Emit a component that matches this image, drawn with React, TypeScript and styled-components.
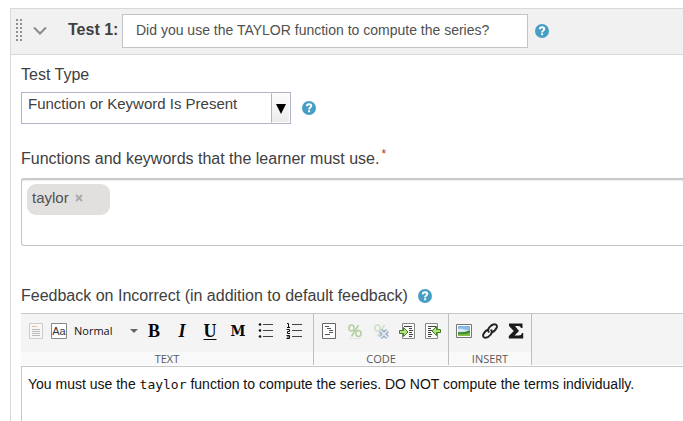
import React, { useState } from 'react';
import styled, { createGlobalStyle } from 'styled-components';

const GlobalStyle = createGlobalStyle`
  * { box-sizing: border-box; }
  body {
    margin: 0;
    background: #fff;
    color: #404040;
    font: 16px/20px "Liberation Sans", Arial, sans-serif;
    overflow-x: hidden;
  }
  button, input, select, textarea { font: inherit; color: inherit; }
`;

const Card = styled.section`
  margin: 8px 0 0 10px;
  border: 1px solid #d9d9d9;
  border-width: 1px 0 0 1px;
  min-height: calc(100vh - 8px);
`;

const Header = styled.header`
  display: flex;
  align-items: center;
  height: 46px;
  padding: 0 5px 2px;
  background: #f1f1f1;
  border-bottom: 1px solid #d9d9d9;
`;

const PlainButton = styled.button`
  display: flex;
  flex: none;
  align-items: center;
  justify-content: center;
  padding: 0;
  border: 0;
  background: none;
  cursor: pointer;
`;

const Toggle = styled(PlainButton)`
  margin: 0 21px 0 10px;
`;

const TitleLabel = styled.label`
  flex: none;
  width: 54px;
  padding-bottom: 2px;
  font-weight: bold;
`;

const TitleInput = styled.input`
  flex: 0 1 406px;
  min-width: 0;
  height: 34px;
  padding: 0 13px 2px;
  border: 1px solid #c4c4c4;
  background: #fff;
  color: #505050;
  font-size: 14px;
`;

const HelpButton = styled(PlainButton)<{ $gap: number }>`
  margin-left: ${(p) => p.$gap}px;
`;

const Body = styled.div`
  padding: 10px 0 0 10px;
`;

const Field = styled.div<{ $space: number }>`
  margin-bottom: ${(p) => p.$space}px;
`;

const FieldLabel = styled.label`
  display: block;
`;

const Row = styled.div<{ $top?: number }>`
  display: flex;
  align-items: center;
  margin-top: ${(p) => p.$top ?? 0}px;
`;

const SelectBox = styled.div`
  display: grid;
  grid-template-columns: 1fr 19px;
  width: 270px;
  height: 32px;
  border: 1px solid #aeb4c6;
`;

const Select = styled.select`
  grid-area: 1 / 1 / 2 / 3;
  appearance: none;
  width: 100%;
  padding: 0 20px 8px 6px;
  border: 0;
  border-radius: 0;
  background: #fff;
  font-size: 15px;
`;

const SelectArrow = styled.span`
  grid-area: 1 / 2;
  display: flex;
  align-items: center;
  justify-content: center;
  border: 1px solid #fff;
  border-left-color: #aeb4c6;
  background: linear-gradient(#fcfcfc, #ececec);
  pointer-events: none;
`;

const Required = styled.sup`
  margin-left: 2px;
  color: #c0281c;
  font-size: 12px;
  line-height: 0;
`;

const TagBox = styled.div`
  display: flex;
  align-items: flex-start;
  min-height: 68px;
  margin-top: 9px;
  padding: 5px;
  border: 1px solid #c6c6c6;
  border-right: 0;
  border-radius: 3px 0 0 3px;
  box-shadow: inset 0 2px 2px -1px #bbb;
`;

const Tag = styled.span`
  display: flex;
  align-items: center;
  gap: 6px;
  min-width: 83px;
  height: 31px;
  padding: 0 5px 4px;
  border-radius: 9px;
  background: #e1e0de;
  color: #505050;
  font-size: 15px;
`;

const TagInput = styled.input`
  flex: 1;
  min-width: 0;
  height: 31px;
  border: 0;
  outline: 0;
  background: transparent;
`;

const Toolbar = styled.div`
  display: flex;
  height: 53px;
  margin-top: 7px;
  padding-bottom: 1px;
  border-top: 1px solid #c8c8c8;
  background: linear-gradient(#f4f4f4 51px, #fff 51px);
`;

const Group = styled.div<{ $width: number }>`
  display: flex;
  flex: none;
  flex-direction: column;
  width: ${(p) => p.$width}px;
  border-right: 1px solid #bfbfbf;
`;

const Tools = styled.div<{ $gap: number }>`
  display: flex;
  align-items: center;
  gap: ${(p) => p.$gap}px;
  height: 38px;
  padding: 0 7px 4px;
`;

const ToolRun = styled.div<{ $gap: number }>`
  display: flex;
  align-items: center;
  gap: ${(p) => p.$gap}px;
`;

const GroupName = styled.div`
  height: 13px;
  background: #f9f9f9;
  color: #5a5a5a;
  font: 11px/13px "Open Sans", "Noto Sans", sans-serif;
  text-align: center;
`;

const Tool = styled(PlainButton)`
  width: 16px;
  height: 20px;
  color: #111;
`;

const StyleMenu = styled(PlainButton)`
  justify-content: space-between;
  width: 64px;
  color: #111;
  font: 11px/18px "Open Sans", "Noto Sans", sans-serif;
`;

const Glyph = styled.span<{ $italic?: boolean; $underline?: boolean; $mono?: boolean }>`
  color: #080808;
  font: bold 18px/20px "Liberation Serif", serif;
  ${(p) => p.$italic && 'font-style: italic;'}
  ${(p) => p.$underline && 'text-decoration: underline; text-decoration-thickness: 1px; text-underline-offset: 2px;'}
  ${(p) => p.$mono && 'font-family: "DejaVu Serif Condensed", "DejaVu Serif", serif; font-size: 15px;'}
`;

const Editor = styled.div`
  min-height: 64px;
  padding: 7px 6px;
  border: 1px solid #c6c6c6;
  border-width: 1px 0 0 1px;
  outline: 0;
  color: #111;
  font-size: 14px;
`;

const Code = styled.code`
  font: 13px/20px "DejaVu Sans Mono", monospace;
`;

const Help = ({ gap, topic }: { gap: number; topic: string }) => (
  <HelpButton type="button" $gap={gap} aria-label={`Help: ${topic}`}>
    <svg width="14" height="14" viewBox="0 0 14 14">
      <circle cx="7" cy="7" r="7" fill="#469ec4" />
      <path d="M4.800 5.300C4.900 3.900 5.800 3.300 7 3.300c1.400 0 2.300.7 2.300 1.800C9.300 6.500 7.100 6.500 7.100 8.400" fill="none" stroke="#fff" strokeWidth="1.900" />
      <rect x="6.100" y="9.300" width="2" height="1.900" fill="#fff" />
    </svg>
  </HelpButton>
);

const Icon = ({ children }: { children: React.ReactNode }) => (
  <svg width="16" height="16" viewBox="0 0 16 16" fill="none">{children}</svg>
);

const Grip = () => (
  <svg width="7" height="23" viewBox="0 0 7 23" fill="#919191" aria-hidden="true">
    {[0, 4, 8, 12, 16, 20].map((y) => (
      <g key={y}>
        <rect y={y} width="2" height="2" />
        <rect x="4" y={y} width="2" height="2" />
      </g>
    ))}
  </svg>
);

const PageIcon = () => (
  <Icon>
    <path d="M1.500.5h13v15h-13z" fill="#f7f7f7" stroke="#ccc" />
    <path d="M4 3.500h5" stroke="#f0b89a" />
    <path d="M4 6.500h8M4 8.500h8M4 10.500h8M4 12.500h8" stroke="#b8b8b8" />
  </Icon>
);

const FormatIcon = () => (
  <Icon>
    <path d="M.5.5h15v15H.5z" fill="#fff" stroke="#888" />
    <text x="8" y="12" fill="#333" fontFamily="Liberation Sans, sans-serif" fontSize="11" textAnchor="middle">Aa</text>
  </Icon>
);

const BulletsIcon = () => (
  <Icon>
    <path d="M5 1.500h10M5 7.500h10M5 13.500h10" stroke="#444" />
    <g fill="#111"><circle cx="2" cy="1.500" r="1.300" /><circle cx="2" cy="7.500" r="1.300" /><circle cx="2" cy="13.500" r="1.300" /></g>
  </Icon>
);

const NumbersIcon = () => (
  <Icon>
    <path d="M6 1.500h10M6 7.500h10M6 13.500h10" stroke="#444" />
    <path d="M1 .5h1.500V4M1 4.500h3M.5 6.500h3v2h-2v2H4M.5 12.500h3v3h-3M1 14h2" stroke="#111" />
  </Icon>
);

const IndentIcon = () => (
  <Icon>
    <path d="M1.500.5h13v15h-13z" fill="#fff" stroke="#666" />
    <path d="M4 3.500h4M6 5.500h4M8 7.500h4M8 9.500h4M4 11.500h5" stroke="#555" />
  </Icon>
);

const Percent = ({ color }: { color: string }) => (
  <g stroke={color} strokeWidth="1.500">
    <ellipse cx="4.500" cy="5" rx="2.600" ry="3" />
    <ellipse cx="11.500" cy="10.500" rx="2.600" ry="3" />
    <path d="M11.500 2L4.500 13.500" />
  </g>
);

const PercentIcon = () => (
  <Icon>
    <path d="M2 15.500h12" stroke="#e4e4e4" />
    <Percent color="#b1cf9e" />
  </Icon>
);

const UncommentIcon = () => (
  <Icon>
    <Percent color="#d0dec8" />
    <path d="M7.500 7.500l7 7m0-7l-7 7" stroke="#8fa1b9" strokeWidth="4" />
    <path d="M7.500 7.500l7 7m0-7l-7 7" stroke="#dce6f1" strokeWidth="2" />
  </Icon>
);

const IndentRightIcon = () => (
  <Icon>
    <path d="M3.500.5h12v15h-12z" fill="#fafafa" stroke="#888" />
    <path d="M5 3.500h8M10 5.500h3M10 7.500h4M10 9.500h3M10 11.500h4M10 13.500h3" stroke="#444" />
    <path d="M.5 7.500h4v-3L9 9l-4.500 4.500v-3h-4z" fill="#b5df83" stroke="#3f7f20" />
  </Icon>
);

const IndentLeftIcon = () => (
  <Icon>
    <path d="M.5.5h12v15H.5z" fill="#fafafa" stroke="#888" />
    <path d="M3 3.500h8M3 5.500h3M3 7.500h4M3 9.500h3M3 11.500h4M3 13.500h3" stroke="#444" />
    <path d="M15.500 6.500h-4v-3L7 8l4.500 4.500v-3h4z" fill="#b5df83" stroke="#3f7f20" />
  </Icon>
);

const ImageIcon = () => (
  <Icon>
    <path d="M.5 1.500h15v13H.5z" fill="#fff" stroke="#777" />
    <path d="M2 3h12v10H2z" fill="#86b9e4" />
    <path d="M2 6q3-1 5 0t7 1v2H2z" fill="#d7e8f4" />
    <path d="M2 9q6 1 12-2v6H2z" fill="#3e8c2c" />
    <path d="M2 11q6 1 12-1v3H2z" fill="#86bd45" />
  </Icon>
);

const LinkIcon = () => (
  <Icon>
    <g stroke="#222" strokeWidth="1.900" strokeLinecap="round">
      <path d="M6.800 8.800C5.500 7.500 6 6 7.500 4.200 9 2.200 10.500 1.200 12.500 1.200c2.200 0 3 1.800 2 3.800-1 2-2.500 3.800-4.800 4.300" />
      <path d="M9.200 7.200c1.300 1.300.8 2.800-.7 4.600-1.500 2-3 3-5 3-2.200 0-3-1.800-2-3.800 1-2 2.500-3.800 4.800-4.300" />
    </g>
  </Icon>
);

const SigmaIcon = () => (
  <Icon>
    <path d="M1 .5h13.500V5H13q-.5-2-2.500-2H7l4 5-4.500 4.500h4q3 0 3.500-2.500h1.200v5.500H.8V13l5-5-4.800-5z" fill="#1c1c1c" />
  </Icon>
);

type ToolItem = [string, React.ReactNode];

const textTools: ToolItem[] = [
  ['Bold', <Glyph>B</Glyph>],
  ['Italic', <Glyph $italic>I</Glyph>],
  ['Underline', <Glyph $underline>U</Glyph>],
  ['Monospace', <Glyph $mono>M</Glyph>],
  ['Bulleted list', <BulletsIcon />],
  ['Numbered list', <NumbersIcon />],
];

const codeTools: ToolItem[] = [
  ['Smart indent', <IndentIcon />],
  ['Comment', <PercentIcon />],
  ['Uncomment', <UncommentIcon />],
  ['Increase indent', <IndentRightIcon />],
  ['Decrease indent', <IndentLeftIcon />],
];

const insertTools: ToolItem[] = [
  ['Image', <ImageIcon />],
  ['Hyperlink', <LinkIcon />],
  ['Equation', <SigmaIcon />],
];

const ToolList = ({ items }: { items: ToolItem[] }) => (
  <>
    {items.map(([name, icon]) => (
      <Tool key={name} type="button" aria-label={name}>{icon}</Tool>
    ))}
  </>
);

export default function App() {
  const [title, setTitle] = useState('Did you use the TAYLOR function to compute the series?');
  return (
    <>
      <GlobalStyle />
      <Card>
        <Header>
          <Grip />
          <Toggle type="button" aria-label="Collapse test">
            <svg width="14" height="10" viewBox="0 0 14 10" fill="none">
              <path d="M1 1.500l6 6 6-6" stroke="#8b8b8b" strokeWidth="2" />
            </svg>
          </Toggle>
          <TitleLabel htmlFor="title">Test 1:</TitleLabel>
          <TitleInput id="title" value={title} onChange={(e) => setTitle(e.target.value)} />
          <Help gap={7} topic="test title" />
        </Header>
        <Body>
          <Field $space={25}>
            <FieldLabel htmlFor="type">Test Type</FieldLabel>
            <Row $top={7}>
              <SelectBox>
                <Select id="type">
                  <option>Function or Keyword Is Present</option>
                </Select>
                <SelectArrow>
                  <svg width="10" height="11" viewBox="0 0 10 11"><path d="M0 1h10L5 11z" fill="#000" /></svg>
                </SelectArrow>
              </SelectBox>
              <Help gap={11} topic="test type" />
            </Row>
          </Field>
          <Field $space={40}>
            <FieldLabel htmlFor="keywords">
              Functions and keywords that the learner must use.<Required>*</Required>
            </FieldLabel>
            <TagBox>
              <Tag>
                taylor
                <PlainButton type="button" aria-label="Remove taylor">
                  <svg width="8" height="8" viewBox="0 0 8 8"><path d="M1 1l6 6m0-6L1 7" stroke="#aaa" strokeWidth="2" /></svg>
                </PlainButton>
              </Tag>
              <TagInput id="keywords" />
            </TagBox>
          </Field>
          <Row>
            <span id="feedback">Feedback on Incorrect (in addition to default feedback)</span>
            <Help gap={10} topic="feedback" />
          </Row>
          <Toolbar role="toolbar" aria-label="Feedback formatting">
            <Group $width={293}>
              <Tools $gap={8}>
                <ToolRun $gap={7}>
                  <Tool type="button" aria-label="Page"><PageIcon /></Tool>
                  <Tool type="button" aria-label="Text format"><FormatIcon /></Tool>
                  <StyleMenu type="button">
                    Normal
                    <svg width="8" height="4" viewBox="0 0 8 4"><path d="M0 0h8L4 4z" fill="#666" /></svg>
                  </StyleMenu>
                </ToolRun>
                <ToolRun $gap={12}><ToolList items={textTools} /></ToolRun>
              </Tools>
              <GroupName>TEXT</GroupName>
            </Group>
            <Group $width={135}>
              <Tools $gap={10}><ToolList items={codeTools} /></Tools>
              <GroupName>CODE</GroupName>
            </Group>
            <Group $width={83}>
              <Tools $gap={10}><ToolList items={insertTools} /></Tools>
              <GroupName>INSERT</GroupName>
            </Group>
          </Toolbar>
          <Editor role="textbox" aria-multiline="true" aria-labelledby="feedback" contentEditable suppressContentEditableWarning>
            You must use the <Code>taylor</Code> function to compute the series. DO NOT compute the terms individually.
          </Editor>
        </Body>
      </Card>
    </>
  );
}
